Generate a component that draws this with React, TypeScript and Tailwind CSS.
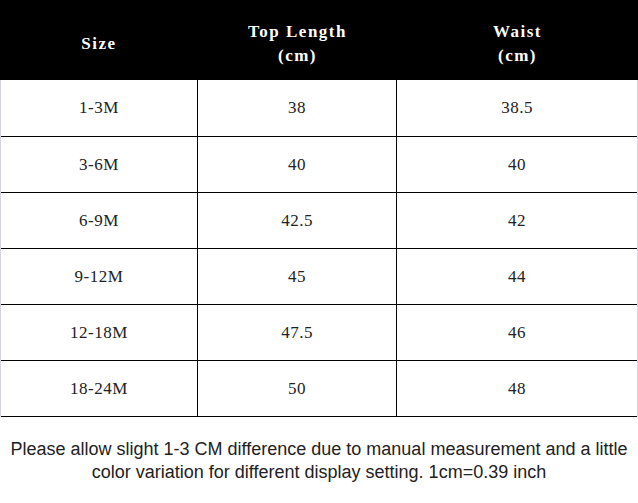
const rows = [
  ["1-3M", "38", "38.5"],
  ["3-6M", "40", "40"],
  ["6-9M", "42.5", "42"],
  ["9-12M", "45", "44"],
  ["12-18M", "47.5", "46"],
  ["18-24M", "50", "48"],
];

export default function App() {
  return (
    <div className="w-[638px] h-[503px] bg-white">
      {/* Size chart */}
      <div className="w-[638px]">
        {/* Header */}
        <div className="h-[80px] bg-black grid grid-cols-[198px_199px_241px] items-center pt-[7px] text-white font-bold text-[17px] leading-[24px] tracking-[1.5px] font-['Liberation_Serif',serif]">
          <div className="text-center">Size</div>
          <div className="text-center">
            Top Length
            <br />
            (cm)
          </div>
          <div className="text-center">
            Waist
            <br />
            (cm)
          </div>
        </div>

        {/* Rows */}
        <div className="border-l border-r border-[#d4d4dc]">
          {rows.map((r, i) => (
            <div
              key={i}
              className={`grid grid-cols-[197px_199px_240px] border-b border-black text-[#222] text-[17px] tracking-[0.5px] font-['Liberation_Serif',serif] ${i === 0 ? "h-[57px]" : "h-[56px]"}`}
            >
              <div className="flex items-center justify-center border-r border-black">{r[0]}</div>
              <div className="flex items-center justify-center border-r border-black">{r[1]}</div>
              <div className="flex items-center justify-center">{r[2]}</div>
            </div>
          ))}
        </div>
      </div>

      {/* Note */}
      <p className="mt-[21px] text-center text-[18px] leading-[23px] text-[#222] font-['Liberation_Sans',Arial,sans-serif]">
        Please allow slight 1-3 CM difference due to manual measurement and a little
        <br />
        color variation for different display setting. 1cm=0.39 inch
      </p>
    </div>
  );
}
